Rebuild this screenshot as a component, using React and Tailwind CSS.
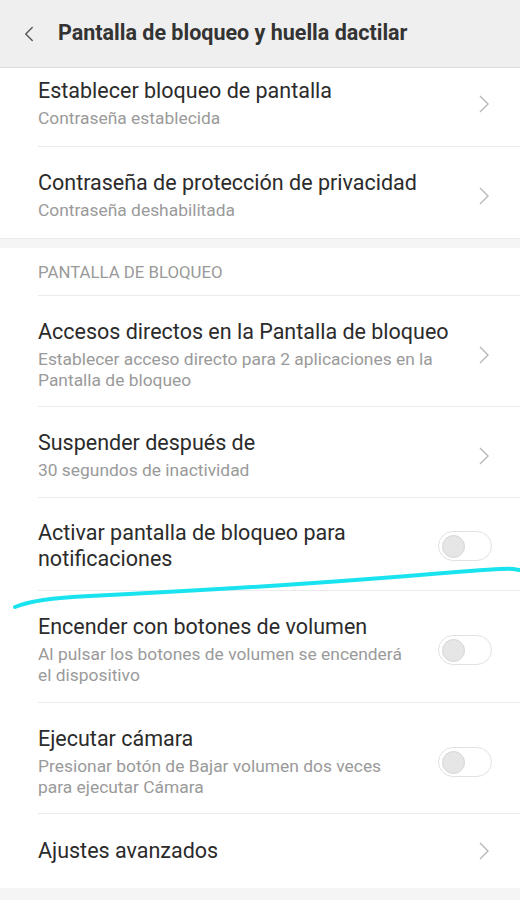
import { ChevronLeft } from 'lucide-react';

// Fila con flecha a la derecha
function Chevron() {
  return (
    <svg width="12" height="20" viewBox="0 0 12 20" className="shrink-0">
      <path d="M2 2 L10 10 L2 18" fill="none" stroke="#b8b8b8" strokeWidth="1.4" />
    </svg>
  );
}

function Toggle() {
  return (
    <div className="shrink-0 w-[54px] h-[30px] rounded-full border border-[#e2e2e2] bg-white flex items-center px-[3px]">
      <div className="w-[23px] h-[23px] rounded-full bg-[#e6e6e6] border border-[#d6d6d6]" />
    </div>
  );
}

function Row({ title, subtitle, control = 'chevron', className = 'pt-[23px] pb-[16px]', divider = true }) {
  return (
    <div className="pl-[38px]">
      <div className={`flex items-center pr-[30px] ${divider ? 'border-b border-[#ebebeb]' : ''} ${className}`}>
        <div className="flex-1 min-w-0 pr-4">
          <div className="text-[21.5px] leading-[26px] text-[#2b2b2b] whitespace-nowrap">{title}</div>
          {subtitle && (
            <div className="mt-1 text-[17.4px] leading-[21px] text-[#9a9a9a] whitespace-nowrap">{subtitle}</div>
          )}
        </div>
        {control === 'chevron' ? <Chevron /> : <div className="-mr-[2px]"><Toggle /></div>}
      </div>
    </div>
  );
}

export default function App() {
  return (
    <div className="relative w-[520px] h-[900px] overflow-hidden bg-white font-['Roboto',sans-serif]">
      {/* Cabecera */}
      <div className="h-[68px] bg-[#efefef] border-b border-[#dcdcdc] flex items-center pl-[16px]">
        <ChevronLeft size={26} strokeWidth={1.3} color="#555" />
        <h1 className="ml-[16px] text-[21.5px] font-bold text-[#333]">Pantalla de bloqueo y huella dactilar</h1>
      </div>

      <Row title="Establecer bloqueo de pantalla" subtitle="Contraseña establecida" className="pt-[10px] pb-[17px]" />
      <Row title="Contraseña de protección de privacidad" subtitle="Contraseña deshabilitada" className="pt-[23px] pb-[17px]" divider={false} />

      <div className="h-[10px] bg-[#f5f5f5] border-t border-[#ececec]" />

      <div className="pl-[38px]">
        <div className="h-[48px] pt-[3px] flex items-center border-b border-[#ebebeb] text-[16.8px] text-[#9a9a9a]">
          PANTALLA DE BLOQUEO
        </div>
      </div>

      <Row
        title="Accesos directos en la Pantalla de bloqueo"
        subtitle={<>Establecer acceso directo para 2 aplicaciones en la<br />Pantalla de bloqueo</>}
        className="pt-[23px] pb-[15px]"
      />
      <Row title="Suspender después de" subtitle="30 segundos de inactividad" />
      <Row
        title={<>Activar pantalla de bloqueo para<br />notificaciones</>}
        control="toggle"
        className="pt-[22px] pb-[18px]"
      />
      <Row
        title="Encender con botones de volumen"
        subtitle={<>Al pulsar los botones de volumen se encenderá<br />el dispositivo</>}
        control="toggle"
      />
      <Row
        title="Ejecutar cámara"
        subtitle={<>Presionar botón de Bajar volumen dos veces<br />para ejecutar Cámara</>}
        control="toggle"
        className="pt-[23px] pb-[15px]"
      />
      <Row title="Ajustes avanzados" divider={false} className="py-[24px]" />

      <div className="h-[20px] bg-[#f5f5f5]" />

      {/* Trazo a mano en cian */}
      <svg className="absolute left-0 top-0 pointer-events-none" width="520" height="900">
        <path
          d="M15 607 C 30 601, 50 598, 90 596 S 300 585, 420 575 S 505 570, 522 570"
          fill="none"
          stroke="#19e3ee"
          strokeWidth="4"
          strokeLinecap="round"
        />
      </svg>
    </div>
  );
}
